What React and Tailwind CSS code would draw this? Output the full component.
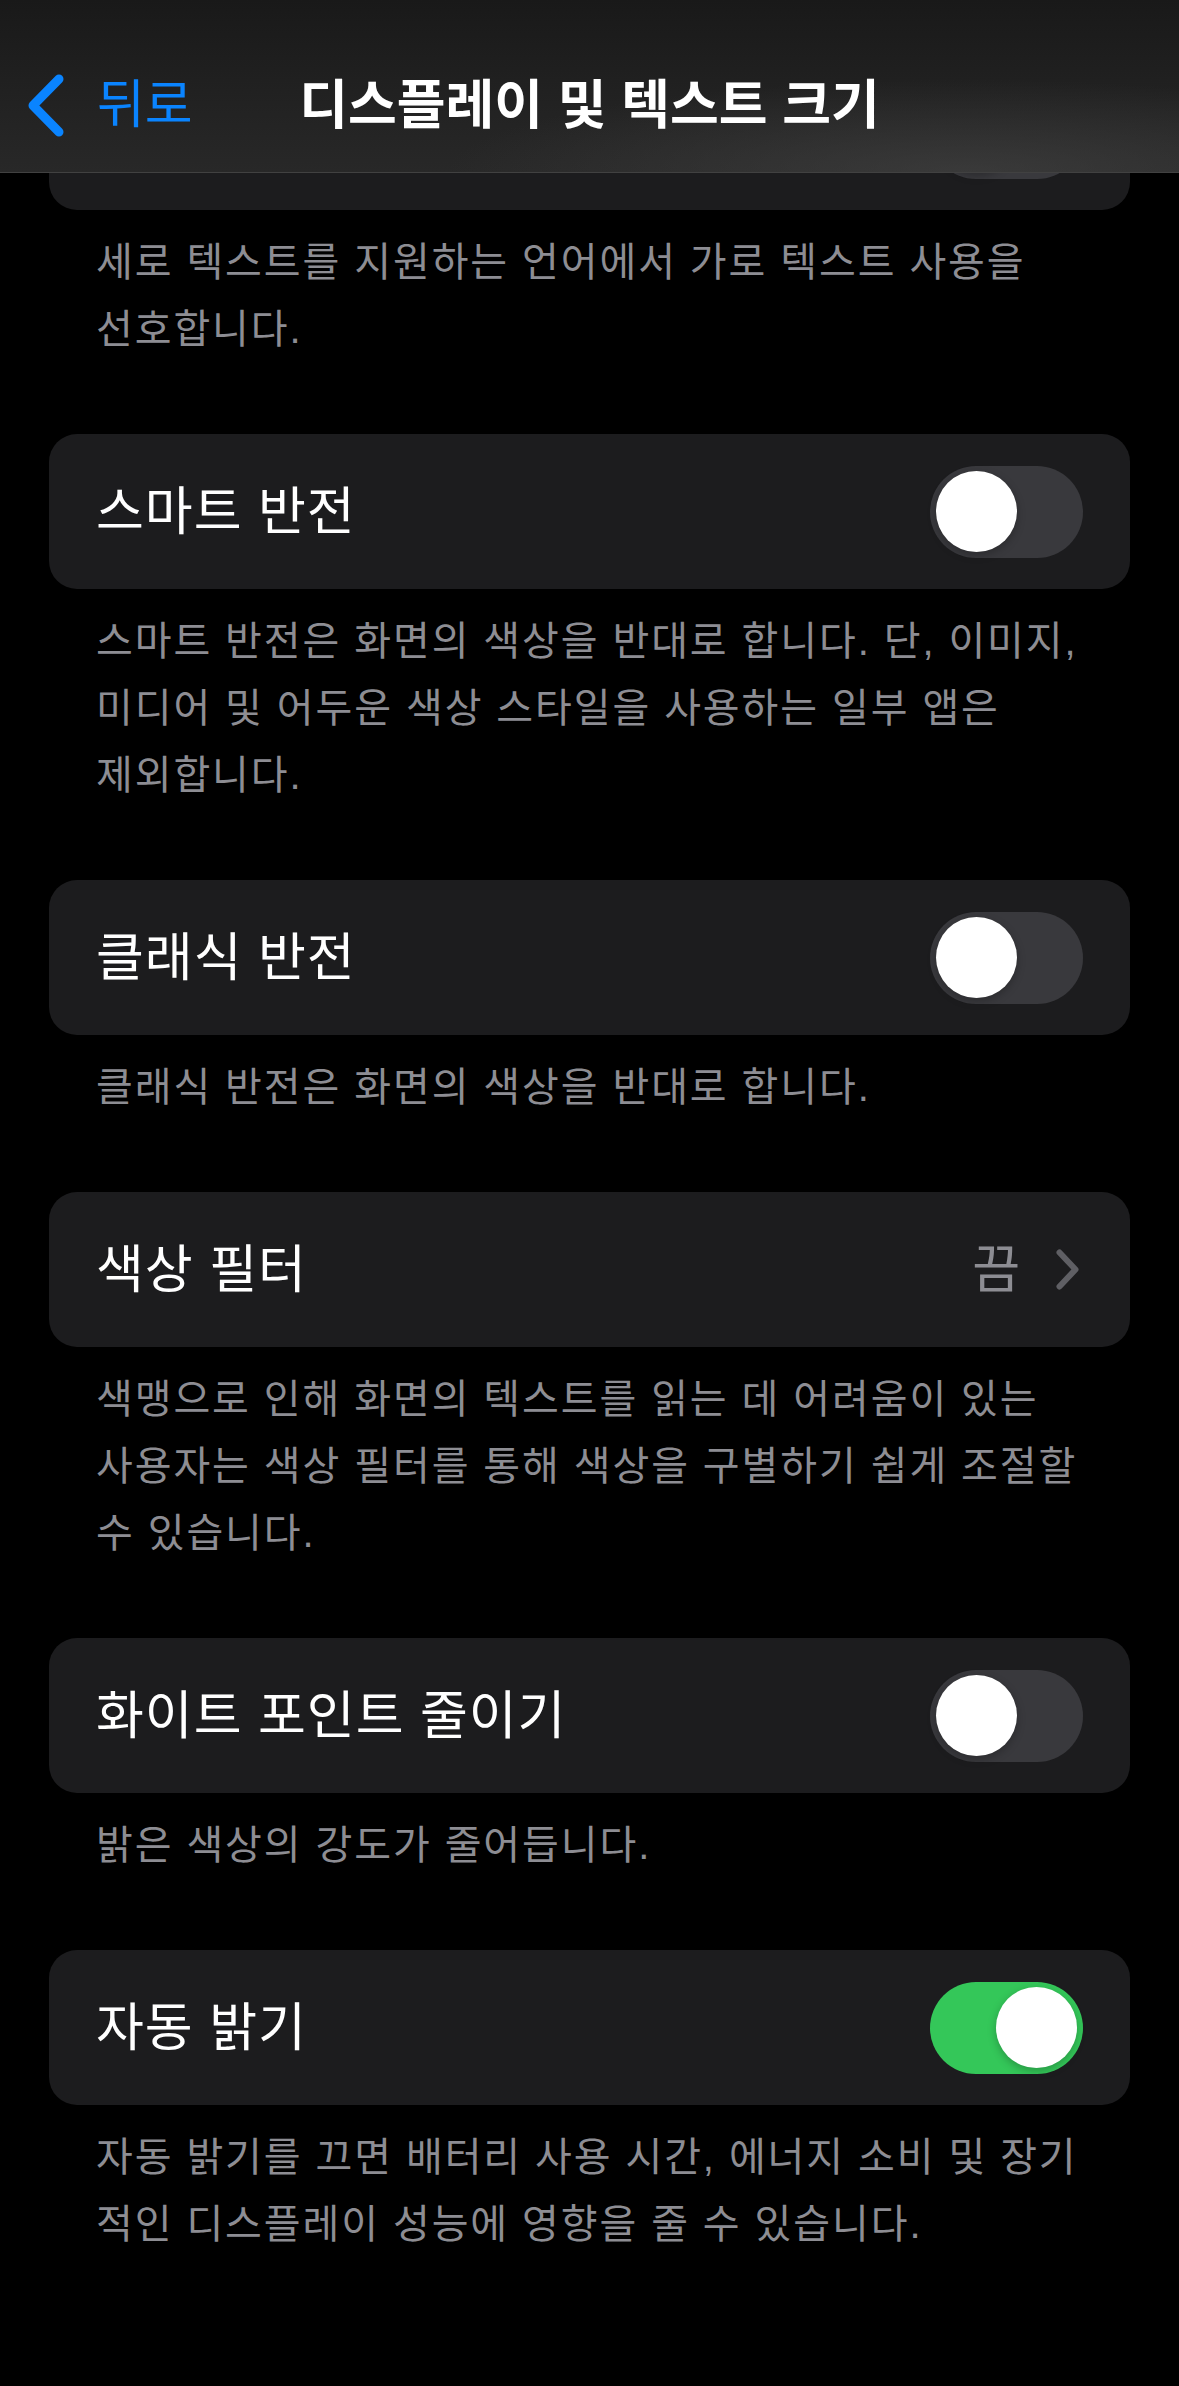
import React from "react";

function Toggle({ on }) {
  return (
    <div
      className={
        "flex h-[92px] w-[153px] shrink-0 items-center rounded-full p-[6px] " +
        (on ? "justify-end bg-[#34c759]" : "justify-start bg-[#39393d]")
      }
    >
      <div className="size-[81px] rounded-full bg-white shadow-[0_3px_8px_rgba(0,0,0,0.25)]" />
    </div>
  );
}

function Card({ label, on, value }) {
  return (
    <div
      className={
        "flex h-[155px] items-center justify-between rounded-[28px] bg-[#1c1c1e] pl-[47px] " +
        (value ? "pr-[51px]" : "pr-[47px]")
      }
    >
      <span className="whitespace-nowrap text-[52px] leading-none tracking-[1px] text-white">{label}</span>
      {value ? (
        <div className="flex items-center">
          <span className="text-[52px] leading-none text-[#8d8d93]">{value}</span>
          <svg className="ml-[36px]" width="23" height="41" viewBox="0 0 23 41" fill="none">
            <polyline
              points="3.5,3.5 19.5,20.5 3.5,37.5"
              stroke="#5f5f64"
              strokeWidth="6"
              strokeLinecap="round"
              strokeLinejoin="round"
            />
          </svg>
        </div>
      ) : (
        <Toggle on={on} />
      )}
    </div>
  );
}

function Footer({ lines }) {
  return (
    <div className="px-[47px] pb-[71px] pt-[19px] text-[40px] leading-[67px] tracking-[1.9px] text-[#8d8d93]">
      {lines.map((l, i) => (
        <div key={i} className="whitespace-nowrap">
          {l}
        </div>
      ))}
    </div>
  );
}

const sections = [
  {
    label: "",
    on: false,
    lines: ["세로 텍스트를 지원하는 언어에서 가로 텍스트 사용을", "선호합니다."],
  },
  {
    label: "스마트 반전",
    on: false,
    lines: [
      "스마트 반전은 화면의 색상을 반대로 합니다. 단, 이미지,",
      "미디어 및 어두운 색상 스타일을 사용하는 일부 앱은",
      "제외합니다.",
    ],
  },
  {
    label: "클래식 반전",
    on: false,
    lines: ["클래식 반전은 화면의 색상을 반대로 합니다."],
  },
  {
    label: "색상 필터",
    value: "끔",
    lines: [
      "색맹으로 인해 화면의 텍스트를 읽는 데 어려움이 있는",
      "사용자는 색상 필터를 통해 색상을 구별하기 쉽게 조절할",
      "수 있습니다.",
    ],
  },
  {
    label: "화이트 포인트 줄이기",
    on: false,
    lines: ["밝은 색상의 강도가 줄어듭니다."],
  },
  {
    label: "자동 밝기",
    on: true,
    lines: [
      "자동 밝기를 끄면 배터리 사용 시간, 에너지 소비 및 장기",
      "적인 디스플레이 성능에 영향을 줄 수 있습니다.",
    ],
  },
];

export default function App() {
  return (
    <div className="relative min-h-[2386px] w-full overflow-hidden bg-black font-['Liberation_Sans','Noto_Sans_CJK_KR',sans-serif]">
      <div className="px-[49px] pt-[55px]">
        {sections.map((s, i) => (
          <div key={i}>
            <Card label={s.label} on={s.on} value={s.value} />
            <Footer lines={s.lines} />
          </div>
        ))}
      </div>

      <div className="absolute inset-x-0 top-0 h-[173px] border-b border-[#414141] bg-[radial-gradient(ellipse_at_82%_100%,rgba(72,72,72,0.55)_0%,rgba(72,72,72,0)_38%),linear-gradient(to_bottom,#191919,#282828)]">
        <div className="mt-[61px] grid h-[88px] grid-cols-[1fr_auto_1fr] items-center">
          <div className="flex items-center pl-[28px]">
            <svg width="36" height="63" viewBox="0 0 36 63" fill="none">
              <polyline
                points="31,5 5,31.5 31,58"
                stroke="#0a84ff"
                strokeWidth="9"
                strokeLinecap="round"
                strokeLinejoin="round"
              />
            </svg>
            <span className="ml-[33px] whitespace-nowrap text-[52px] leading-none text-[#0a84ff]">뒤로</span>
          </div>
          <span className="whitespace-nowrap text-[53px] font-semibold leading-none text-white">
            디스플레이 및 텍스트 크기
          </span>
          <div />
        </div>
      </div>
    </div>
  );
}
